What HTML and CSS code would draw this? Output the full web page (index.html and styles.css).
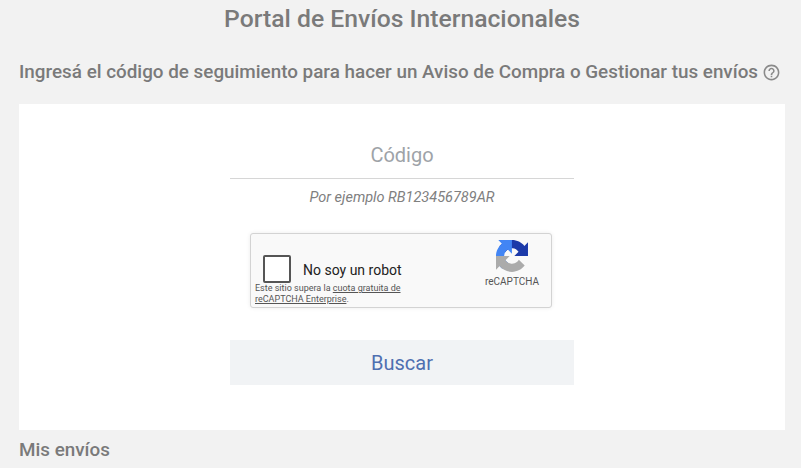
FILE: index.html
```html
<!DOCTYPE html>
<html lang="es">
<head>
  <meta charset="UTF-8" />
  <title>Portal de Envíos Internacionales</title>
  <link rel="stylesheet" href="styles.css">
</head>
<body>

<h1 class="title">Portal de Envíos Internacionales</h1>

<h2 class="subtitle">
  Ingresá el código de seguimiento para hacer un Aviso de Compra o Gestionar tus envíos
  <svg class="help-icon" viewBox="0 0 24 24" width="19" height="19" aria-hidden="true">
    <path fill="#8a8a8a" d="M11 18h2v-2h-2v2zm1-16C6.48 2 2 6.48 2 12s4.48 10 10 10 10-4.48 10-10S17.52 2 12 2zm0 18c-4.41 0-8-3.59-8-8s3.59-8 8-8 8 3.59 8 8-3.59 8-8 8zm0-14c-2.21 0-4 1.79-4 4h2c0-1.1.9-2 2-2s2 .9 2 2c0 2-3 1.75-3 5h2c0-2.25 3-2.5 3-5 0-2.21-1.79-4-4-4z"/>
  </svg>
</h2>

<div class="card">
  <div class="form">
    <input class="code-input" type="text" placeholder="Código">
    <p class="hint">Por ejemplo RB123456789AR</p>

    <div class="captcha">
      <div class="captcha-main">
        <div class="captcha-check">
          <span class="checkbox"></span>
          <span class="captcha-label">No soy un robot</span>
        </div>
        <p class="captcha-note">Este sitio supera la <a href="#">cuota gratuita de</a><br><a href="#">reCAPTCHA Enterprise</a>.</p>
      </div>
      <div class="captcha-brand">
        <svg viewBox="0 0 64 64" width="32" height="32" aria-hidden="true">
          <path fill="#1c3aa9" d="M64 31.955l-.033-1.37V4.687l-7.16 7.16C50.948 4.674 42.033.093 32.05.093c-10.4 0-19.622 4.96-25.458 12.64l11.736 11.86a15.55 15.55 0 0 1 4.754-5.334c2.05-1.6 4.952-2.906 8.968-2.906.485 0 .86.057 1.135.163 4.976.393 9.288 3.14 11.828 7.124l-8.307 8.307L64 31.953"/>
          <path fill="#4285f4" d="M31.862.094l-1.37.033H4.594l7.16 7.16C4.58 13.147 0 22.06 0 32.046c0 10.4 4.96 19.622 12.64 25.458l11.86-11.736a15.55 15.55 0 0 1-5.334-4.754c-1.6-2.05-2.906-4.952-2.906-8.968 0-.485.057-.86.163-1.135.393-4.976 3.14-9.288 7.124-11.828l8.307 8.307L31.86.095"/>
          <path fill="#ababab" d="M.001 32l.033 1.37v25.898l7.16-7.16c5.86 7.173 14.774 11.753 24.76 11.753 10.4 0 19.622-4.96 25.458-12.64L45.677 39.36a15.55 15.55 0 0 1-4.754 5.334c-2.05 1.6-4.952 2.906-8.968 2.906-.485 0-.86-.057-1.135-.163-4.976-.393-9.288-3.14-11.828-7.124l8.307-8.307c-10.522.04-22.4.066-27.3-.005"/>
        </svg>
        <span class="captcha-name">reCAPTCHA</span>
      </div>
    </div>

    <button class="search-btn">Buscar</button>
  </div>
</div>

<h2 class="section-title">Mis envíos</h2>

</body>
</html>
```

FILE: styles.css
```css
html, body { height: 100%; overflow: hidden; }
body {
  margin: 0;
  padding: 0 16px 0 19px;
  background: #f2f2f2;
  color: #7a7a7a;
  font-family: Roboto, "Liberation Sans", sans-serif;
}
.title {
  margin: 0;
  padding-top: 3px;
  font-size: 24.7px;
  line-height: 32px;
  font-weight: 500;
  text-align: center;
}
.subtitle {
  display: flex;
  align-items: center;
  gap: 4px;
  margin: 25px 0 0;
  font-size: 18.85px;
  line-height: 24px;
  font-weight: 500;
  white-space: nowrap;
}
.help-icon { flex: none; margin-top: 1px; }
.card {
  margin-top: 20px;
  height: 326px;
  background: #fff;
}
.form {
  width: 344px;
  margin: 0 auto;
  padding-top: 32px;
  display: flex;
  flex-direction: column;
  align-items: center;
}
.code-input {
  width: 100%;
  height: 43px;
  box-sizing: border-box;
  padding: 0 0 5px;
  border: none;
  border-bottom: 1px solid #d6d6d6;
  outline: none;
  background: transparent;
  font-family: inherit;
  font-size: 20px;
  text-align: center;
  color: #555;
}
.code-input::placeholder { color: #9ea3a8; opacity: 1; }
.hint {
  margin: 10px 0 0;
  font-size: 14.5px;
  line-height: 18px;
  font-style: italic;
  color: #808080;
}
.captcha {
  box-sizing: border-box;
  width: 302px;
  height: 75px;
  margin-top: 26px;
  margin-right: 2px;
  display: flex;
  justify-content: space-between;
  background: #f9f9f9;
  border: 1px solid #d3d3d3;
  border-radius: 3px;
  box-shadow: 0 0 4px rgba(0,0,0,0.08);
}
.captcha-main { padding: 21px 0 0 4px; width: 160px; }
.captcha-check { display: flex; align-items: center; gap: 12px; padding-left: 8px; }
.checkbox {
  width: 24px;
  height: 24px;
  background: #fff;
  border: 2px solid #555;
  border-radius: 2px;
  flex: none;
}
.captcha-label {
  margin-top: 2px;
  font-size: 14px;
  color: #222;
}
.captcha-note {
  margin: 0;
  font-size: 9px;
  line-height: 11px;
  white-space: nowrap;
  color: #555;
}
.captcha-note a { color: #555; }
.captcha-brand {
  width: 66px;
  margin-right: 6px;
  padding-top: 6px;
  display: flex;
  flex-direction: column;
  align-items: center;
  gap: 4px;
}
.captcha-name {
  font-size: 10px;
  line-height: 12px;
  color: #555;
}
.search-btn {
  width: 100%;
  height: 45px;
  margin-top: 32px;
  border: none;
  background: #f1f3f5;
  color: #4f6fb0;
  font-family: inherit;
  font-size: 20px;
  cursor: pointer;
}
.section-title {
  margin: 8px 0 0;
  font-size: 18.85px;
  line-height: 24px;
  font-weight: 500;
}
```
